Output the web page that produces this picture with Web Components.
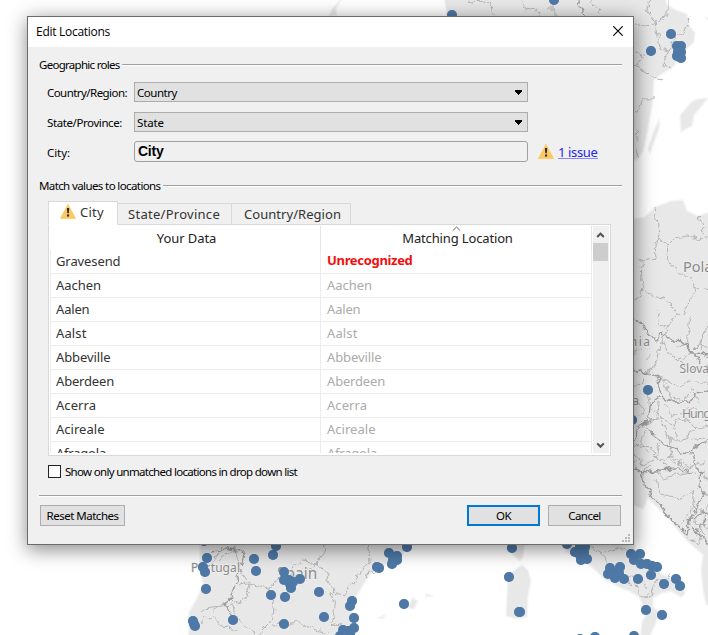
<!DOCTYPE html>
<html lang="en">
<head>
<meta charset="utf-8">
<title>Edit Locations</title>
<style>
html,body{margin:0;height:635px;overflow:hidden;background:#fff}
</style>
</head>
<body>
<location-app></location-app>
<script>
const define = (name, html, setup) => customElements.define(name, class extends HTMLElement {
  connectedCallback() {
    if (this.shadowRoot) return;
    const t = document.createElement('template');
    t.innerHTML = html;
    this.attachShadow({mode: 'open'}).append(t.content.cloneNode(true));
    if (setup) setup(this, this.shadowRoot);
  }
});

/* One line of text tracked to an exact width in pixels. */
define('fit-text', `<style>
:host{display:inline-block;white-space:pre;flex:none;line-height:16px}
span{display:inline-block}</style><span><slot></slot></span>`, (el, root) => {
  const span = root.querySelector('span');
  const want = +el.getAttribute('w');
  const n = el.textContent.length;
  if (want) {
    const have = span.getBoundingClientRect().width;
    span.style.letterSpacing = ((want - have) / n).toFixed(3) + 'px';
  }
});

define('warning-icon', `<style>:host{display:block;width:16px;height:15px;flex:none}svg{display:block}</style>
<svg width="16" height="15" viewBox="0 0 16 15"><path d="M8 .4 15.6 14.6H.4Z" fill="#fdc761" stroke="#fdc761" stroke-width=".7" stroke-linejoin="round"/><path d="M6.9 4h2.3l-.4 5.3H7.3ZM7 10.5h2.1v2H7Z" fill="#2b2b2b"/></svg>`);

define('group-rule', `<style>
:host{display:flex;align-items:flex-start;height:16px;gap:2px}
i{flex:1;height:1px;margin-top:7px;background:#a0a0a0;border-bottom:1px solid #fff}</style><slot></slot><i></i>`);

define('form-row', `<style>
:host{display:flex;align-items:flex-start;height:30px}
.l{width:87px;padding-top:3px;flex:none}</style><div class="l"><slot name="label"></slot></div><slot></slot>`);

define('combo-box', `<style>
:host{display:flex;box-sizing:border-box;width:394px;height:20px;background:#e1e1e1;border:1px solid #adadad;padding:2px 4px 0 2px;justify-content:space-between}
svg{margin-top:5px}</style><slot></slot><svg width="8" height="5" shape-rendering="crispEdges"><path d="M0 0h7v1H0zM0 1h7v1H0zM1 2h5v1H1zM2 3h3v1H2zM3 4h1v1H3z"/></svg>`);

define('value-box', `<style>
:host{display:block;box-sizing:border-box;width:394px;height:21px;margin-top:-1px;border:1px solid #a0a0a0;border-radius:3px;padding:1px 0 0 3px;font:bold 14px/16px "Liberation Sans",Arial,sans-serif}</style><slot></slot>`);

define('issue-link', `<style>
:host{display:flex;align-items:flex-start;gap:4px;margin:2px 0 0 10px;font-family:"Noto Sans",sans-serif;font-size:13px}
a{color:#2424ef;display:block;height:14px;line-height:15px;border-bottom:1px solid #8b85f5}</style><warning-icon></warning-icon><a><slot></slot></a>`);

define('tab-item', `<style>
:host{display:flex;box-sizing:border-box;height:22px;border:1px solid #d9d9d9;border-left-width:0;border-bottom:1px solid #d9d9d9;background:#f0f0f0;padding:2px 0 0 11px;color:#333}
:host([active]){height:24px;background:#fff;border-left-width:1px;border-bottom-color:#fff;padding:2px 0 0 11px;gap:4px}</style><slot></slot>`);

define('scroll-bar', `<style>
:host{display:flex;flex-direction:column;justify-content:space-between;width:16px;height:227px;background:#f0f0f0;margin-left:1px}
i{display:block;width:15px;height:18px;background:#cdcdcd}svg{display:block}</style>
<div><svg width="16" height="17"><path d="M4.2 11 7.5 7.6l3.3 3.4" fill="none" stroke="#505050" stroke-width="2"/></svg><i></i></div>
<svg width="16" height="17"><path d="M4.2 7.4 7.5 10.8l3.3-3.4" fill="none" stroke="#505050" stroke-width="2"/></svg>`);

define('data-row', `<style>
:host{display:grid;grid-template-columns:271px 271px;height:24px}
div{box-sizing:border-box;height:24px;border-right:1px solid #ececec;border-bottom:1px solid #ececec;padding:3px 0 0 6px}
.m{color:#ababab}
:host([bad]) .m{color:#f00f0f;font-weight:700;padding-top:2px}</style>
<div><slot name="a"></slot></div><div class="m"><slot name="b"></slot></div>`);

define('match-table', `<style>
:host{display:flex;box-sizing:border-box;width:563px;height:232px;background:#fff;border:1px solid #d9d9d9;padding:1px;overflow:hidden}
.grid{width:542px;height:227px;overflow:hidden;position:relative}
.head{display:grid;grid-template-columns:271px 271px;height:24px}
.head div{box-sizing:border-box;display:flex;justify-content:center;border-right:1px solid #e4e4e4;padding:4px 0 0 3px;color:#222}
.rows{box-sizing:border-box;width:543px;border-left:1px solid #ececec}
.rows data-row{margin-left:-1px}
.sort{position:absolute;left:402px;top:0}</style>
<div class="grid"><div class="head"><div><fit-text w="59.5">Your Data</fit-text></div><div><fit-text w="110.5">Matching Location</fit-text></div></div>
<svg class="sort" width="9" height="6"><path d="M.8 4.6 4.5 1l3.7 3.6" fill="none" stroke="#606060"/></svg>
<div class="rows"></div></div><scroll-bar></scroll-bar>`, (el, root) => {
  const data = [['Gravesend',64.5,'Unrecognized',85.5],['Aachen',45],['Aalen',33.5],['Aalst',30.5],['Abbeville',54.5],['Aberdeen',58],['Acerra',40],['Acireale',48.5],['Afragola',50]];
  root.querySelector('.rows').innerHTML = data.map(([a, w, b, v]) =>
    `<data-row ${b ? 'bad' : ''}><fit-text slot="a" w="${w}">${a}</fit-text><fit-text slot="b" w="${v || w}">${b || a}</fit-text></data-row>`).join('');
});

define('push-button', `<style>
:host{display:flex;box-sizing:border-box;width:73px;height:21px;justify-content:center;background:#e1e1e1;border:1px solid #adadad;padding-top:2px}
:host([wide]){width:85px}
:host([primary]){border:2px solid #0078d7;padding-top:1px}</style><slot></slot>`);

define('edit-dialog', `<style>
:host{display:block;box-sizing:border-box;width:607px;height:529px;background:#f0f0f0;border:1px solid #6b6b6b;box-shadow:1px 4px 18px 1px rgba(0,0,0,.45);font:11.5px/16px "Noto Sans","Open Sans",sans-serif;color:#000;position:relative}
header{display:flex;justify-content:space-between;background:#fff;height:30px;box-sizing:border-box;padding:7px 10px 0 8px;font:12px "Open Sans","Noto Sans",sans-serif}
header svg{margin-top:2px}
main{padding:10px 11px 0 11px}
.form{padding:9px 0 0 8px;height:96px}
.tabs{display:flex;align-items:flex-end;height:24px;position:relative;z-index:1;margin-bottom:-1px}
.data{padding:7px 0 0 9px;font-family:"Noto Sans",sans-serif;font-size:13px;color:#333}
.check{display:flex;gap:4px;padding:8px 0 0 9px;height:31px;box-sizing:border-box}
.check i{box-sizing:border-box;width:13px;height:13px;border:1px solid #222;background:#fff;margin-top:1px}
hr{border:0;height:1px;background:#a0a0a0;border-bottom:1px solid #fff;margin:8px 0 0}
footer{display:flex;gap:8px;padding:8px 1px 0}
footer > :first-child{margin-right:auto}
.grip{position:absolute;right:3px;bottom:2px}</style>
<header><fit-text w="74">Edit Locations</fit-text><svg width="10" height="10"><path d="M.3.3 9.7 9.7M9.7.3.3 9.7" stroke="#000" stroke-width="1.15"/></svg></header>
<main>
<group-rule><fit-text w="80.5">Geographic roles</fit-text></group-rule>
<div class="form">
<form-row><fit-text slot="label" w="80">Country/Region:</fit-text><combo-box><fit-text w="40">Country</fit-text></combo-box></form-row>
<form-row><fit-text slot="label" w="75">State/Province:</fit-text><combo-box><fit-text w="27">State</fit-text></combo-box></form-row>
<form-row><fit-text slot="label" w="23">City:</fit-text><value-box><fit-text w="25.5">City</fit-text></value-box><issue-link><fit-text w="39.5">1 issue</fit-text></issue-link></form-row>
</div>
<group-rule><fit-text w="121.5">Match values to locations</fit-text></group-rule>
<div class="data"><div class="tabs">
<tab-item active style="width:70px"><warning-icon></warning-icon><fit-text w="24">City</fit-text></tab-item>
<tab-item style="width:114px;padding-left:10px"><fit-text w="92">State/Province</fit-text></tab-item>
<tab-item style="width:119px;padding-left:12px"><fit-text w="97">Country/Region</fit-text></tab-item></div>
<match-table></match-table></div>
<div class="check"><i></i><fit-text w="232">Show only unmatched locations in drop down list</fit-text></div>
<hr>
<footer><push-button wide><fit-text w="72">Reset Matches</fit-text></push-button><push-button primary><fit-text w="15">OK</fit-text></push-button><push-button><fit-text w="32.5">Cancel</fit-text></push-button></footer>
</main>
<svg class="grip" width="8" height="8" fill="#b8b8b8"><path d="M6 0h2v2H6zM3 3h2v2H3zM6 3h2v2H6zM0 6h2v2H0zM3 6h2v2H3zM6 6h2v2H6z"/></svg>`);

define('map-canvas', `<style>:host{display:block;width:708px;height:635px}svg{display:block;font-family:"Noto Sans",sans-serif}</style>
<svg width="708" height="635" viewBox="0 0 708 635">
<defs><filter id="j" x="0" y="0" width="708" height="635" filterUnits="userSpaceOnUse" color-interpolation-filters="sRGB"><feTurbulence type="fractalNoise" baseFrequency=".13" numOctaves="3" seed="4"/><feDisplacementMap in="SourceGraphic" scale="9" xChannelSelector="R" yChannelSelector="G"/></filter></defs>
<g fill="#e8e8e8" stroke="#f4f4f4" stroke-width="1.5">
<path d="M444 -3 450 30H630V160L637 160 643 152 648 128 653 100 654 80 662 74 674 66 686 50 694 42 695 33 689 25 687 14 676 10 667 5 665 -3Z"/>
<path d="M690 103 697 99 708 98 700 108 694 115 692 126 681 132 680 116ZM659 120 660 126 650 153 648 149 654 130ZM342 -2 336 9 337 16H329L332 9 336 5ZM706 18 712 15V24Z"/>
<path d="M630 219 645 217 655 207 671 201 683 200 687 211 698 216 712 211V605L706 605 703 590 701 570 703 555 695 548 686 540 671 522 655 505 648 498 643 509 630 504Z"/>
<path d="M200 540V567L203 585 196 600 189 612 189 622 188 640H354L355 618 350 608 359 592 368 577 377 568 393 562 405 551 407 540Z"/>
<path d="M508 540 525 540 523 557 520 561 513 555ZM522 565 528 570 531 580 528 596 527 617 516 619 506 616 507 596 508 575ZM412 598 418 601 414 609 408 608ZM426 594 433 596 426 597ZM379 618 385 615 383 619Z"/>
<path d="M558 540 567 552 585 561 596 571 605 580 621 588 631 592 639 597 643 606 647 613 642 622 640 640H648L656 623 659 612 653 607 653 598 662 593 671 591 681 597 685 594 684 586 675 579 662 574 648 561 636 550 634 540Z"/></g>
<g filter="url(#j)" fill="none" stroke="#b3b3b3" stroke-width="1">
<path d="M470 0 482 4 490 2 494 16M520 -2 526 10 536 8 542 20M590 -3 602 16M555 20V8H546M650 -3 646 10 656 24 668 15 668 -3M656 24 660 47 668 52 673 39 684 31 690 16M634 24 645 25 656 24M668 52 665 65 672 68M634 65 641 68 652 77 660 80M634 52 644 53 642 60 634 66M634 112 640 108 645 98 655 98M634 130 640 132 636 140M634 152 643 158"/>
<path d="M655 207 658 235 655 245 656 258 640 260 641 280 644 290 652 296 663 298 672 306 677 313 685 314 690 298 697 288 692 280 680 272 668 262 666 246 674 238 688 236 704 240M658 239 666 244M700 217 704 232 710 239M697 288 712 290M677 313 667 330 662 340M690 316 686 344 677 348M712 320 704 332 700 350 710 360M644 290 634 302M662 340 667 352 678 360 690 354 700 344 712 350M660 345 658 360 650 372 634 371M652 346 645 360M700 344 706 330M680 360 690 370 712 364M654 372 664 378 678 388 690 380 712 384M662 378 672 398 685 400 693 388M693 388 700 404M650 420 660 418 670 424 686 418 693 428 712 424M658 415 670 440 672 460 688 470 704 460M670 440 684 440 694 428M672 424 678 440M690 440 704 438 712 446M634 445 650 448 660 460 670 455 690 468M634 456 644 464 654 460M640 475 652 470 664 478 690 472 710 480M656 480 660 494 680 498 695 490 692 510 680 525M634 460 638 472 650 466M660 400 654 420 634 428M648 392 652 410M634 388 646 378"/>
<path d="M200 570 214 561 220 546M220 561 235 548 240 570 250 585 243 603 228 600 210 612M240 586 250 583 268 588 278 580 296 578 304 571 318 563 325 552 322 540M318 563 327 574 332 592 346 595 358 576 370 560 368 540M268 588 274 606 273 620 262 631 258 640M332 592 335 606 332 622 350 628M273 625 300 622 310 628 328 634M200 612 212 607 232 605 238 620 256 634M202 622 214 616 225 628 238 630M288 583 293 566 304 561 318 563M364 577 375 570M590 545 604 555 609 568 622 574 632 587M604 551 620 548 634 556M620 575 640 577 648 589M636 582 640 595 650 598 654 584 670 576"/></g>
<g filter="url(#j)" fill="none" stroke="#9a9a9a" stroke-width="1.3">
<path d="M577 -3 585 18M634 320 644 325 650 336 656 338 660 332 672 340 682 341 692 353 712 354M634 370 650 374 660 376 657 384 662 397 674 402 690 402 696 394 712 390M660 397 650 405 649 420 636 430 634 440M648 426 656 438 670 448 686 454 700 444 712 440M692 452 695 468 704 474 697 480 705 494 696 508 688 522 699 534M634 470 648 472 676 468 693 473M640 470 644 486 656 500 670 518 686 533M211 550 226 548 245 552 242 562 234 588 230 600 224 603 233 620M686 533 690 520 700 514 712 512M680 340 692 350 700 362M706 520 697 530 710 547"/></g>
<g filter="url(#j)" fill="none" stroke="#acacac" stroke-width=".8"><path d="M634 400 644 408 640 416M666 404 672 416 688 408 700 412M646 430 640 443 650 455M660 444 656 456 666 466M634 352 644 350M690 520 708 528M694 508 706 516 700 530 710 540M686 536 697 543 702 533M660 310 657 325 668 330M700 484 710 500 704 512"/></g>
<g fill="#8b8b8b" stroke="#f0f0f0" stroke-width="1.5" paint-order="stroke">
<text x="683" y="272" font-size="14.5">Pola</text><text x="607" y="346" font-size="12" textLength="43">zechia</text><text x="679.5" y="373" font-size="12">Slova</text><text x="682" y="418" font-size="12.5" textLength="29">Hung</text><text x="600" y="405" font-size="12" textLength="39">Austria</text><text x="191" y="572" font-size="12" textLength="49">Portugal</text><text x="277" y="579" font-size="15.5">Spain</text></g>
<g id="dots" fill="#4e79a7" stroke="#f1f1f1" stroke-opacity=".55" stroke-width="1"></g></svg>`, (el, root) => {
  const pts = [[452,15],[554,0],[671,34],[651,51],[677,46],[681,46],[678,52],[681,52],[677,56],[681,58],[648,390],[632,420],
  [204,541],[207,558],[203,567],[205,572],[206,589],[193,621],[194,624],[195,626],[233,620],[254,559],[256,571],[276,546],[273,555],[284,572],[284,580],[289,580],[293,582],[300,579],[291,588],[290,584],[271,595],[285,597],[319,592],[284,624],[324,617],[352,601],[350,606],[354,618],[354,628],[348,631],[343,630],[340,636],[350,634],
  [377,567],[379,568],[389,553],[397,556],[393,560],[392,564],[397,560],[407,547],[404,604],[512,548],[509,577],[519,612],[520,612],[567,544],[575,552],[580,546],[585,547],[580,555],[581,560],[587,559],[584,552],
  [610,568],[620,567],[608,574],[614,573],[619,573],[615,578],[624,579],[631,554],[640,554],[634,560],[641,564],[647,564],[652,566],[657,567],[638,579],[651,575],[664,584],[676,579],[680,586],[646,610],[662,615],[595,637],[580,639],[634,636]];
  const ns = 'http://www.w3.org/2000/svg';
  for (const [x, y] of pts) {
    const c = document.createElementNS(ns, 'circle');
    c.setAttribute('cx', x); c.setAttribute('cy', y); c.setAttribute('r', 5);
    root.querySelector('#dots').append(c);
  }
  const g = root.querySelector('#dots').cloneNode(true);
  g.removeAttribute('id'); g.setAttribute('stroke', 'none');
  root.querySelector('svg').append(g);
});

define('location-app', `<style>:host{display:grid;width:708px;height:635px;overflow:hidden}
map-canvas,edit-dialog{grid-area:1/1}edit-dialog{margin:16px 0 0 27px}</style><map-canvas></map-canvas><edit-dialog></edit-dialog>`);
</script>
</body>
</html>
